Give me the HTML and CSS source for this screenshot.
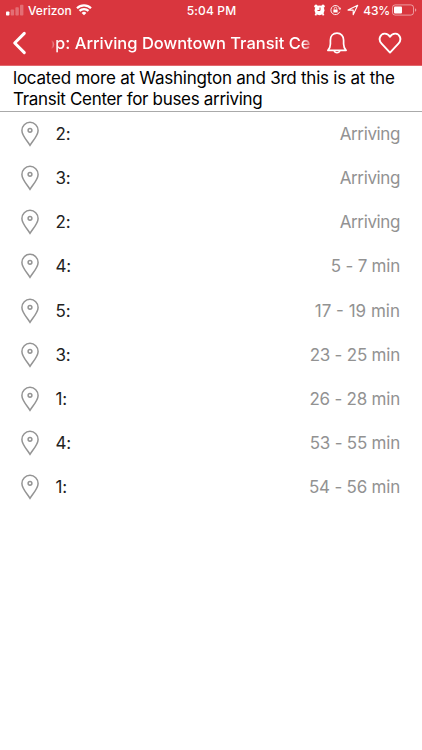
FILE: index.html
```html
<!DOCTYPE html>
<html lang="en">
<head>
<meta charset="utf-8">
<meta name="viewport" content="width=device-width, initial-scale=1">
<title>Arriving Downtown Transit Center</title>
<link rel="stylesheet" href="styles.css">
</head>
<body>
<svg class="defs" width="0" height="0" aria-hidden="true">
  <symbol id="pin" viewBox="0 0 20 26"><path d="M10 24.3C7.5 20 1.9 14.6 1.9 9.4a8.1 8.1 0 0 1 16.2 0c0 5.2-5.6 10.6-8.1 14.9z"/><circle cx="10" cy="9.3" r="1.9"/></symbol>
</svg>
<header class="header">
  <div class="status">
    <div class="carrier">
      <svg width="18" height="12" viewBox="0 0 18 12" fill="#fff"><rect x="0" y="7.5" width="3.4" height="4" rx=".8"/><g opacity=".28"><rect x="4.7" y="5.5" width="3.4" height="6" rx=".8"/><rect x="9.4" y="3.2" width="3.4" height="8.3" rx=".8"/><rect x="14" y="0.8" width="3.4" height="10.7" rx=".8"/></g></svg>
      <span class="network">Verizon</span>
      <svg width="16" height="12" viewBox="0 0 16 12" fill="none" stroke="#fff" stroke-width="2.2"><path d="M1 4.3a10 10 0 0 1 14 0M3.5 6.9a6.4 6.4 0 0 1 9 0"/><path d="M8 11.3 5.6 8.9a3.5 3.5 0 0 1 4.8 0z" fill="#fff" stroke="none"/></svg>
    </div>
    <span class="time">5:04 PM</span>
    <div class="indicators">
      <svg width="11" height="12" viewBox="0 0 11 12"><circle cx="2" cy="2.2" r="1.7" fill="#fff"/><circle cx="9" cy="2.2" r="1.7" fill="#fff"/><circle cx="5.5" cy="6.3" r="4.9" fill="#fff"/><path d="m2.4 9.3-1 2M8.6 9.3l1 2" stroke="#fff" stroke-width="1.8"/><path d="M6 3.5v3H3.5" fill="none" stroke="#d9363e"/></svg>
      <svg class="lock" width="11" height="12" viewBox="0 0 12 12" fill="none" stroke="#fff"><path d="M10.8 4.8A5 5 0 1 0 10.6 8"/><path d="m9.2 4.2 1.9 1.4.7-2.2" stroke-width=".8"/><rect x="3.7" y="5.5" width="4.6" height="3.2" fill="#fff" stroke="none"/><path d="M4.7 5.5V4.3a1.3 1.3 0 0 1 2.6 0v1.2" stroke-width=".8"/></svg>
      <svg class="location" width="12" height="12" viewBox="0 0 12 12" fill="none" stroke="#fff" stroke-width="1.1" stroke-linejoin="round"><path d="M1 6.1 10.7 1.3 6.2 10.8V6.1z"/></svg>
      <span class="percent">43%</span>
      <svg width="25" height="12" viewBox="0 0 25 12"><rect x=".5" y=".9" width="21" height="10.2" rx="2.6" fill="none" stroke="#fff" stroke-opacity=".5"/><rect x="2" y="2.4" width="8" height="7.2" rx="1" fill="#fff"/><path d="M23 4.2q1.3.5 1.3 1.8T23 7.8z" fill="#fff" opacity=".5"/></svg>
    </div>
  </div>
  <nav class="nav">
    <svg class="back" width="16" height="24" viewBox="0 0 16 24" fill="none" stroke="#fff" stroke-width="3" stroke-linecap="round" stroke-linejoin="round"><path d="M12.3 2.4 2.7 12l9.6 9.6"/></svg>
    <div class="title"><span>Stop: Arriving Downtown Transit Center</span></div>
    <svg class="bell" width="22" height="24" viewBox="0 0 22 24" fill="none" stroke="#fff" stroke-width="1.7" stroke-linejoin="round"><path d="M1.9 19.3h18.2c-1.6-1.6-2.5-3.5-2.5-6.2V9.2c0-4.2-2.6-7-6.6-7s-6.6 2.8-6.6 7v3.9c0 2.7-.9 4.6-2.5 6.2z"/><path d="M8.2 19.6a2.9 2.9 0 0 0 5.6 0" /></svg>
    <svg class="heart" width="24" height="22" viewBox="0 0 24 22" fill="none" stroke="#fff" stroke-width="1.9" stroke-linejoin="round"><path d="M12 20.6 3.6 11.7C1.9 9.9 1.2 7.3 2 5.1 3.5.9 9.2.2 12 4.8 14.8.2 20.5.9 22 5.1c.8 2.2.1 4.8-1.6 6.6z"/></svg>
  </nav>
</header>
<main>
  <p class="notice"><span class="line one">located more at Washington and 3rd this is at the</span> <span class="line two">Transit Center for buses arriving</span></p>
  <ul class="arrivals">
    <li><svg class="pin"><use href="#pin"/></svg><span class="route">2:</span><span class="eta now">Arriving</span></li>
    <li><svg class="pin"><use href="#pin"/></svg><span class="route">3:</span><span class="eta now">Arriving</span></li>
    <li><svg class="pin"><use href="#pin"/></svg><span class="route">2:</span><span class="eta now">Arriving</span></li>
    <li><svg class="pin"><use href="#pin"/></svg><span class="route">4:</span><span class="eta">5 - 7 min</span></li>
    <li><svg class="pin"><use href="#pin"/></svg><span class="route">5:</span><span class="eta teens">17 - 19 min</span></li>
    <li><svg class="pin"><use href="#pin"/></svg><span class="route">3:</span><span class="eta">23 - 25 min</span></li>
    <li><svg class="pin"><use href="#pin"/></svg><span class="route">1:</span><span class="eta">26 - 28 min</span></li>
    <li><svg class="pin"><use href="#pin"/></svg><span class="route">4:</span><span class="eta">53 - 55 min</span></li>
    <li><svg class="pin"><use href="#pin"/></svg><span class="route">1:</span><span class="eta">54 - 56 min</span></li>
  </ul>
</main>
</body>
</html>
```
FILE: styles.css
```css
* { box-sizing: border-box; }
body { margin: 0; min-height: 750px; background: #fff; color: #222; font-family: Inter, "Liberation Sans", sans-serif; overflow-x: hidden; }
svg { display: block; flex: none; }
.defs { position: absolute; }
.header { height: 66px; background: #d9363e; color: #fff; border-bottom: 1px solid #e2686d; }
.status { height: 21px; display: grid; grid-template-columns: 1fr auto 1fr; align-items: center; padding: 0 5px 0 6px; font-size: 12px; font-weight: 500; line-height: 20px; }
.carrier, .indicators { display: flex; align-items: center; }
.carrier svg, .indicators svg { margin-top: -1px; }
.network { margin: 0 4px 0 4px; font-size: 12px; letter-spacing: 0; }
.time { letter-spacing: .15px; }
.indicators { justify-content: flex-end; }
.lock { margin-left: 5px; }
.location { margin-left: 6px; }
.percent { margin: 0 2px 0 4px; letter-spacing: -.2px; }
.nav { height: 44px; display: flex; align-items: center; padding-left: 12px; }
.title { width: 259px; margin-left: 23px; overflow: hidden; display: flex; line-height: 26px; font-size: 16.5px; font-weight: 500; white-space: nowrap; mask-image: linear-gradient(90deg, transparent, #000 7px, #000 252px, rgba(0, 0, 0, .3)); }
.title span { margin-left: -22px; }
.bell { margin-left: 16px; }
.heart { margin-left: 30px; }
.notice { margin: 0; height: 46px; padding: 2px 13px 0; border-bottom: 1px solid #aaa; font-size: 17px; line-height: 21px; color: #000; }
.line { display: block; white-space: nowrap; }
.one { letter-spacing: -.23px; }
.two { letter-spacing: -.31px; }
.arrivals { list-style: none; margin: 0; padding: 0; }
.arrivals li { display: flex; align-items: center; height: 44.15px; padding: 0 22px 0 20px; font-size: 17px; line-height: 22px; }
.pin { width: 20px; height: 26px; fill: none; stroke: #949494; stroke-width: 1.5; }
.route { margin-left: 15.5px; letter-spacing: -.2px; }
.eta { margin-left: auto; color: #929292; letter-spacing: -.22px; }
.now { letter-spacing: -.38px; }
.teens { letter-spacing: 0; }
```
